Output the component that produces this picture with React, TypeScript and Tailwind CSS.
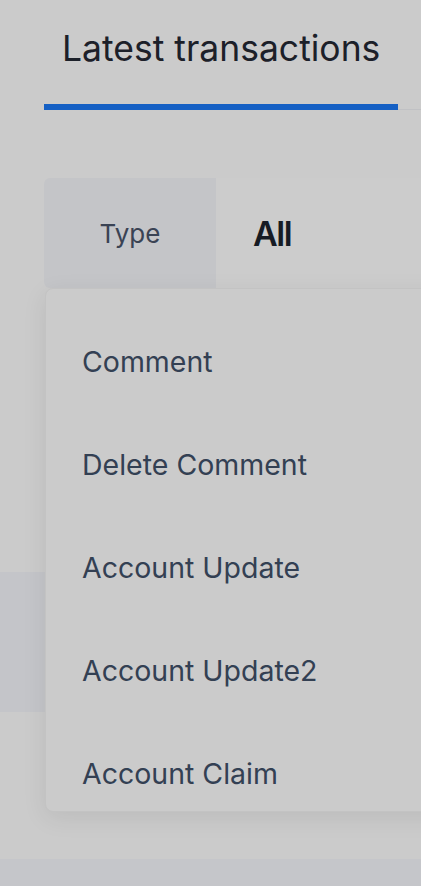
import React from "react";

const items = ["Comment", "Delete Comment", "Account Update", "Account Update2", "Account Claim"];

export default function App() {
  return (
    <div
      className="relative w-[421px] h-[886px] overflow-hidden bg-[#cbcbcb]"
      style={{ fontFamily: "Inter, 'Noto Sans', sans-serif" }}
    >
      {/* Tabs */}
      <div className="ml-[44px] pt-[27px] flex border-b border-[#c0c1c4] w-[500px]">
        <div className="px-[18px] pb-[33px] border-b-[6px] border-[#1560c4] -mb-[1px]">
          <span className="block text-[35.5px] leading-[44px] text-[#1c2029] whitespace-nowrap">
            Latest transactions
          </span>
        </div>
      </div>

      {/* Filter */}
      <div className="relative ml-[44px] mt-[68px] w-[500px]">
        <div className="flex h-[110px] rounded-[6px] overflow-hidden">
          <div className="w-[172px] bg-[#c4c5c8] flex items-center justify-center">
            <span className="text-[26px] text-[#3a4354]">Type</span>
          </div>
          <div className="flex-1 flex items-center pl-[37px] bg-[#cccccc]">
            <span className="text-[34px] font-semibold tracking-[-1.5px] text-[#161b24]">All</span>
          </div>
        </div>

        {/* Dropdown */}
        <div className="absolute z-10 left-[1px] top-[110px] w-[480px] h-[524px] overflow-hidden rounded-[8px] border border-[#c3c3c3] bg-[#cbcbcb] shadow-[0_6px_24px_rgba(0,0,0,0.08)] pt-[21px]">
          {items.map((it) => (
            <div key={it} className="h-[103px] flex items-center pl-[36px]">
              <span className="text-[28.5px] leading-[34px] text-[#334053] whitespace-nowrap">{it}</span>
            </div>
          ))}
        </div>
      </div>

      {/* Underlying content */}
      <div className="mt-[284px] h-[140px] bg-[#c4c5c9]" />
      <div className="mt-[147px] h-[40px] bg-[#c5c6ca]" />
    </div>
  );
}
